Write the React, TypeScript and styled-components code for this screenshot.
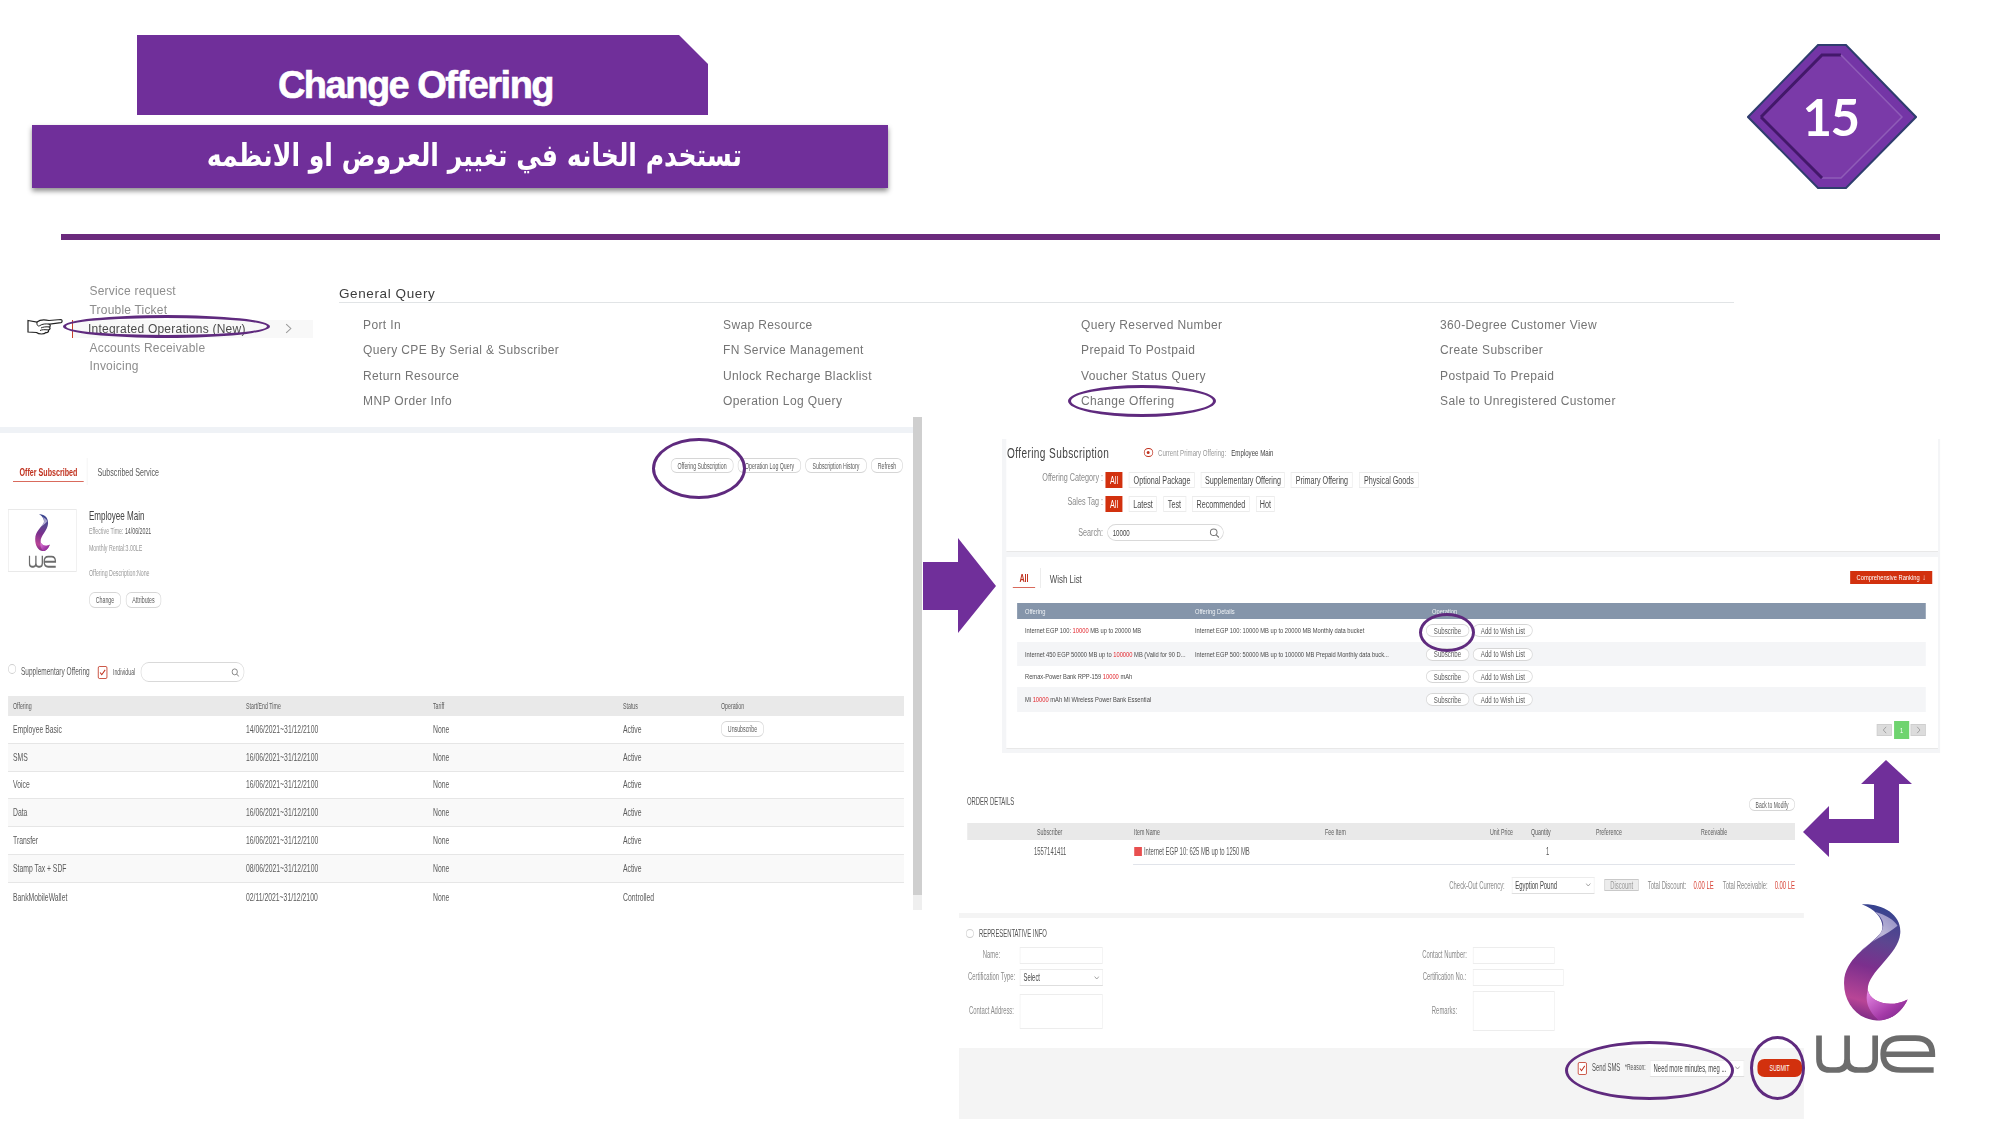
import React from "react";
import styled, { createGlobalStyle } from "styled-components";

const Global = createGlobalStyle`
  html, body { margin: 0; padding: 0; background: #fff; }
  body { font-family: "Liberation Sans", Arial, sans-serif; }
  * { box-sizing: border-box; }
`;

const PURPLE = "#702f9a";
const RED = "#d2310e";
const INK = "#5a5a5a";

/* The pasted screens on the slide are squeezed horizontally: each one lays out
   at a wider size and is scaled back. X() gives a slide-pixel length in that layout. */
const X = (n: number) => `calc(${n}px * var(--ux, 1))`;

const Slide = styled.div`
  position: relative;
  width: 2000px;
  height: 1125px;
  overflow: hidden;
  background: #fff;
`;

/* ---------- slide header ---------- */
const TitleShape = styled.div`
  position: absolute;
  left: 137px;
  top: 35px;
  width: 571px;
  height: 80px;
  background: ${PURPLE};
  clip-path: polygon(0 0, 542px 0, 571px 29px, 571px 80px, 0 80px);
  display: flex;
  align-items: center;
  justify-content: center;
  padding: 20px 14px 0 0;
`;
const TitleText = styled.h1`
  margin: 0;
  color: #fff;
  font: 700 38px/1 "Liberation Sans", Arial, sans-serif;
  letter-spacing: -1.5px;
  -webkit-text-stroke: 0.6px #fff;
`;
const SubtitleBar = styled.div`
  position: absolute;
  left: 32px;
  top: 125px;
  width: 856px;
  height: 63px;
  background: ${PURPLE};
  box-shadow: 0 3px 5px rgba(0, 0, 0, 0.45);
  display: flex;
  align-items: center;
  justify-content: center;
  padding: 0 0 2px 28px;
`;
const SubtitleText = styled.div`
  direction: rtl;
  color: #fff;
  font: 700 31px/1 "DejaVu Sans", sans-serif;
  letter-spacing: -0.6px;
  white-space: nowrap;
  transform: scaleX(0.81);
`;
const Rule = styled.div`
  position: absolute;
  left: 61px;
  top: 234px;
  width: 1879px;
  height: 6px;
  background: #6b2a7d;
`;
const Badge = styled.div`
  position: absolute;
  left: 1747px;
  top: 44px;
  width: 170px;
  height: 145px;
  display: flex;
  align-items: center;
  justify-content: center;
  color: #fff;
  font: 700 51px/1 Lato, "Open Sans", sans-serif;
  letter-spacing: -1.5px;
`;
const BadgeArt = styled.svg`
  position: absolute;
  inset: 0;
`;
const BadgeNumber = styled.span`
  position: relative;
  margin-left: -3px;
`;

/* ---------- service menu ---------- */
const MenuPanel = styled.div`
  position: absolute;
  left: 0;
  top: 282px;
  width: 1734px;
  display: flex;
  filter: blur(0.3px);
`;
const Nav = styled.nav`
  width: 339px;
  flex: none;
`;
const NavItem = styled.div<{ $active?: boolean }>`
  margin-left: 72px;
  width: 241px;
  height: 18.75px;
  display: flex;
  align-items: center;
  justify-content: space-between;
  padding: 0 21px 0 ${(p) => (p.$active ? 15 : 16.5)}px;
  font-size: 12px;
  letter-spacing: ${(p) => (p.$active ? 0.23 : 0.2)}px;
  color: ${(p) => (p.$active ? "#4a4a4a" : "#8d8d8d")};
  background: ${(p) => (p.$active ? "#f8f8f8" : "transparent")};
  border-left: 1px solid ${(p) => (p.$active ? "#c8402a" : "transparent")};
`;
const QueryPanel = styled.section`
  flex: 1;
`;
const QueryTitle = styled.div`
  height: 21px;
  border-bottom: 1px solid #e1e4e6;
  font-size: 13.5px;
  letter-spacing: 0.6px;
  line-height: 23px;
  color: #3d3d3d;
`;
const QueryGrid = styled.div`
  margin-top: 9.5px;
  padding-left: 24px;
  display: grid;
  grid-template-columns: 360px 358px 359px 1fr;
  grid-auto-rows: 25.3px;
  align-items: center;
`;
const QueryLink = styled.div`
  font-size: 12px;
  letter-spacing: 0.38px;
  color: #747474;
  white-space: nowrap;
`;

/* ---------- left screen: offer subscribed ---------- */
const LeftShot = styled.section`
  position: absolute;
  left: 0;
  top: 417px;
  width: 922px;
  height: 493px;
  display: flex;
`;
const LeftMain = styled.div`
  --ux: ${1 / 0.62};
  width: ${X(913)};
  flex: none;
  padding-top: 10px;
  transform: scaleX(0.62);
  transform-origin: 0 0;
  filter: blur(0.3px);
`;
const ScrollTrack = styled.div`
  position: absolute;
  left: 913px;
  top: 0;
  width: 9px;
  height: 100%;
  background: linear-gradient(#cfcfcf 0, #cfcfcf 97%, #efefef 97%);
`;
const Band = styled.div`
  height: 6px;
  background: #eff2f6;
`;
const TopBar = styled.div`
  height: 49px;
  margin-bottom: 27px;
  padding: 25px ${X(10)} 0 ${X(13)};
  display: flex;
  justify-content: space-between;
  align-items: flex-start;
`;
const Tabs = styled.div`
  display: flex;
  align-items: flex-start;
`;
const OfferTab = styled.div`
  width: ${X(71)};
  height: 24px;
  padding-top: 8px;
  text-align: center;
  font-size: 11.5px;
  font-weight: 700;
  color: #c0311e;
  border-bottom: 1px solid #d96a5c;
  white-space: nowrap;
`;
const PlainTab = styled.div`
  margin-left: ${X(3)};
  height: 27px;
  padding: 8px 0 0 ${X(10)};
  border-left: 1px solid #eee;
  font-size: 11.5px;
  color: ${INK};
  white-space: nowrap;
`;
const Toolbar = styled.div`
  display: flex;
  gap: ${X(4.5)};
`;
const GhostButton = styled.div<{ $w: number; $h?: number }>`
  width: ${(p) => X(p.$w)};
  height: ${(p) => p.$h ?? 15}px;
  display: flex;
  align-items: center;
  justify-content: center;
  border: 1px solid #d6d6d6;
  border-radius: 9px / 6px;
  font-size: 8.5px;
  color: ${INK};
  white-space: nowrap;
  background: #fff;
`;
const OfferBlock = styled.div`
  margin-left: ${X(8)};
  display: flex;
  gap: ${X(12)};
`;
const LogoBox = styled.div`
  width: ${X(69)};
  height: 63px;
  border: 1px solid #e9e9e9;
  display: flex;
  align-items: center;
  justify-content: center;
`;
const SmallLogo = styled.div`
  width: ${X(28)};
  height: 55px;
`;
const OfferInfo = styled.div`
  display: flex;
  flex-direction: column;
  align-items: flex-start;
`;
const OfferName = styled.div`
  font-size: 13px;
  line-height: 14px;
  color: #444;
`;
const OfferMeta = styled.div<{ $gap: number }>`
  margin-top: ${(p) => p.$gap}px;
  font-size: 8.5px;
  line-height: 10px;
  color: #9a9a9a;
  white-space: nowrap;
`;
const MetaValue = styled.span`
  color: #555;
`;
const OfferActions = styled.div`
  margin-top: 14px;
  display: flex;
  gap: ${X(5)};
`;
const FilterRow = styled.div`
  margin-top: 54px;
  height: 20px;
  padding-left: ${X(8)};
  display: flex;
  align-items: center;
`;
const SmallCircle = styled.span`
  width: ${X(8)};
  height: 10px;
  margin-top: -6px;
  border: 1px solid #cfcfcf;
  border-radius: 50%;
  flex: none;
`;
const FilterLabel = styled.span`
  margin: -2px 0 0 ${X(5)};
  width: ${X(72)};
  font-size: 10.5px;
  color: ${INK};
  white-space: nowrap;
`;
const CheckMark = styled.span`
  width: ${X(9)};
  height: 13px;
  margin-left: ${X(5)};
  border: 1px solid #c0311e;
  border-radius: 2px;
  display: flex;
  align-items: center;
  justify-content: center;
  flex: none;
  background: #fff;
`;
const IndividualLabel = styled.span`
  margin-left: ${X(6)};
  width: ${X(28)};
  font-size: 8.5px;
  color: ${INK};
`;
const SearchBox = styled.div<{ $w: number; $h: number }>`
  width: ${(p) => X(p.$w)};
  height: ${(p) => p.$h}px;
  padding: 0 ${X(4)} 0 ${X(5)};
  display: flex;
  align-items: center;
  justify-content: space-between;
  border: 1px solid #d9d9d9;
  border-radius: 13px / 9px;
  font-size: 8.5px;
  color: #444;
`;
const SubTable = styled.div`
  margin: 14px ${X(9)} 0 ${X(8)};
`;
const subCols = `${X(233)} ${X(187)} ${X(190)} ${X(98)} 1fr`;
const SubHead = styled.div`
  height: 20px;
  padding-left: ${X(5)};
  display: grid;
  grid-template-columns: ${subCols};
  align-items: center;
  background: #e9e9e9;
  font-size: 8.5px;
  color: #5c5c5c;
`;
const SubRow = styled.div<{ $h: number; $alt?: boolean }>`
  height: ${(p) => p.$h}px;
  padding: 0 0 2px ${X(5)};
  display: grid;
  grid-template-columns: ${subCols};
  align-items: center;
  background: ${(p) => (p.$alt ? "#f9f9f9" : "#fff")};
  border-bottom: 1px solid #e6e6e6;
  font-size: 11px;
  color: ${INK};
  white-space: nowrap;
  &:last-child {
    border-bottom: none;
  }
`;

/* ---------- right screen: offering subscription ---------- */
const OfferingShot = styled.section`
  --ux: ${1 / 0.72};
  position: absolute;
  left: 1002px;
  top: 439px;
  width: ${X(938)};
  height: 314px;
  padding: 0 ${X(2)} 0 ${X(4)};
  background: #f4f5f7;
  transform: scaleX(0.72);
  transform-origin: 0 0;
  filter: blur(0.3px);
`;
const Card = styled.div<{ $h: number }>`
  height: ${(p) => p.$h}px;
  margin-bottom: 5px;
  background: #fff;
  border-bottom: 1px solid #e8e8e8;
`;
const CardHead = styled.div`
  height: 33px;
  padding: 0 0 6px ${X(1)};
  display: flex;
  align-items: center;
`;
const CardTitle = styled.div`
  width: ${X(137)};
  font-size: 14px;
  letter-spacing: 0.55px;
  color: #444;
`;
const Radio = styled.span`
  width: ${X(9)};
  height: 9px;
  margin-right: ${X(5)};
  border: 1px solid #c0311e;
  border-radius: 50%;
  display: flex;
  align-items: center;
  justify-content: center;
  &::after {
    content: "";
    width: 4px;
    height: 3px;
    border-radius: 50%;
    background: #c0311e;
  }
`;
const CurrentNote = styled.div`
  font-size: 8.5px;
  color: #999;
  white-space: nowrap;
`;
const CurrentValue = styled.span`
  margin-left: ${X(5)};
  color: #444;
`;
const ChipRow = styled.div<{ $top: number }>`
  margin-top: ${(p) => p.$top}px;
  display: flex;
  align-items: center;
  gap: ${X(6)};
`;
const ChipLabel = styled.div`
  width: ${X(97)};
  margin-right: ${X(-3)};
  margin-top: -6px;
  text-align: right;
  font-size: 10px;
  color: #8b8b8b;
`;
const Chip = styled.div<{ $w: number; $on?: boolean }>`
  width: ${(p) => X(p.$w)};
  height: 16px;
  margin-right: ${(p) => (p.$on ? X(1) : "0")};
  display: flex;
  align-items: center;
  justify-content: center;
  border: 1px solid ${(p) => (p.$on ? RED : "#ececec")};
  background: ${(p) => (p.$on ? RED : "#fff")};
  color: ${(p) => (p.$on ? "#fff" : "#4a4a4a")};
  font-size: 10px;
  white-space: nowrap;
`;
const SearchRow = styled.div`
  margin-top: 12px;
  display: flex;
  align-items: center;
  gap: ${X(4)};
`;
const SearchLabel = styled.div`
  width: ${X(97)};
  text-align: right;
  font-size: 10px;
  color: #8b8b8b;
`;
const ListTop = styled.div`
  height: 46px;
  padding: 11px ${X(6)} 0 ${X(7)};
  display: flex;
  justify-content: space-between;
  align-items: flex-start;
`;
const ListTabs = styled.div`
  display: flex;
`;
const AllTab = styled.div`
  width: ${X(22)};
  height: 20px;
  padding-top: 5px;
  text-align: center;
  font-size: 10px;
  font-weight: 700;
  color: #c0311e;
  border-bottom: 1px solid #d96a5c;
`;
const WishTab = styled.div`
  margin-left: ${X(5)};
  height: 20px;
  padding: 5px 0 0 ${X(9)};
  border-left: 1px solid #e6e6e6;
  font-size: 11px;
  color: #4a4a4a;
  white-space: nowrap;
`;
const RankButton = styled.div`
  margin-top: 3px;
  width: ${X(82)};
  height: 13px;
  display: flex;
  align-items: center;
  justify-content: center;
  gap: ${X(3)};
  background: ${RED};
  color: #fff;
  font-size: 8px;
  white-space: nowrap;
`;
const Offers = styled.div`
  margin-left: ${X(11)};
  width: ${X(909)};
`;
const OffersHead = styled.div`
  height: 16px;
  padding-left: ${X(8)};
  display: grid;
  grid-template-columns: ${X(170)} ${X(237)} 1fr;
  align-items: center;
  background: #8595aa;
  color: #eef1f4;
  font-size: 8px;
`;
const OfferRow = styled.div<{ $h: number; $alt?: boolean }>`
  height: ${(p) => p.$h}px;
  padding-left: ${X(8)};
  display: grid;
  grid-template-columns: ${X(170)} ${X(231)} 1fr;
  align-items: center;
  background: ${(p) => (p.$alt ? "#f4f5f7" : "#fff")};
  font-size: 8px;
  color: #4a4a4a;
  white-space: nowrap;
`;
const Hit = styled.span`
  color: #e3242b;
`;
const OfferCell = styled.div`
  overflow: hidden;
`;
const OfferOps = styled.div`
  display: flex;
  gap: ${X(4)};
`;
const Pager = styled.div`
  margin-top: 9px;
  display: flex;
  justify-content: flex-end;
  align-items: center;
  gap: ${X(2)};
`;
const PageArrow = styled.div`
  width: ${X(15)};
  height: 12px;
  display: flex;
  align-items: center;
  justify-content: center;
  background: #dcdcdc;
  border: 1px solid #cfcfcf;
`;
const PageCurrent = styled.div`
  width: ${X(15)};
  height: 18px;
  display: flex;
  align-items: center;
  justify-content: center;
  background: #6fd46f;
  color: #fff;
  font-size: 8px;
`;

/* ---------- right screen: order details ---------- */
const OrderShot = styled.section`
  --ux: ${1 / 0.59};
  position: absolute;
  left: 959px;
  top: 790px;
  width: ${X(845)};
  height: 328px;
  padding-top: 8px;
  transform: scaleX(0.59);
  transform-origin: 0 0;
  filter: blur(0.3px);
`;
const OrderHead = styled.div`
  height: 25px;
  padding: 0 ${X(9)} 0 ${X(8)};
  display: flex;
  justify-content: space-between;
  align-items: flex-start;
`;
const OrderTitle = styled.div`
  margin-top: -2px;
  font-size: 10px;
  color: #555;
`;
const orderCols = `${X(70)} ${X(97)} ${X(191)} ${X(165)} ${X(41)} ${X(65)} ${X(105)} 1fr`;
const OrderColumns = styled.div`
  margin: 0 ${X(9)} 0 ${X(8)};
  height: 17px;
  display: grid;
  grid-template-columns: ${orderCols};
  align-items: center;
  background: #e9e9e9;
  font-size: 9px;
  color: #5c5c5c;
  white-space: nowrap;
`;
const OrderRow = styled.div`
  margin: 0 ${X(9)} 0 ${X(8)};
  height: 24px;
  padding-bottom: 1px;
  display: grid;
  grid-template-columns: ${orderCols};
  align-items: center;
  font-size: 10px;
  color: ${INK};
  white-space: nowrap;
`;
const OrderId = styled.span`
  margin-left: ${X(-3)};
`;
const OrderItem = styled.span`
  display: flex;
  align-items: center;
  gap: ${X(2)};
`;
const ItemMark = styled.span`
  width: ${X(8)};
  height: 9px;
  background: #e84f4f;
  flex: none;
`;
const OrderQty = styled.span`
  padding-left: ${X(15)};
`;
const OrderLine = styled.div`
  margin: 0 ${X(9)} 0 ${X(174)};
  height: 1px;
  background: #e1e4ea;
`;
const CheckoutRow = styled.div`
  margin: 11px ${X(9)} 0 0;
  height: 18px;
  display: flex;
  justify-content: flex-end;
  align-items: center;
  gap: ${X(7)};
  font-size: 10px;
  color: #8a8a8a;
  white-space: nowrap;
`;
const SelectBox = styled.div<{ $w: number; $h: number }>`
  width: ${(p) => X(p.$w)};
  height: ${(p) => p.$h}px;
  padding: 0 ${X(3)};
  display: flex;
  align-items: center;
  justify-content: space-between;
  background: #fff;
  border: 1px solid #ececec;
  border-bottom-color: #dedede;
  font-size: 10px;
  color: #444;
  white-space: nowrap;
`;
const DiscountButton = styled.div`
  margin: 0 ${X(2)} 0 ${X(3)};
  width: ${X(34)};
  height: 12px;
  display: flex;
  align-items: center;
  justify-content: center;
  background: #ececec;
  border: 1px solid #c9c9c9;
  color: #9a9a9a;
`;
const Money = styled.span`
  margin-right: ${X(2)};
  color: #d9463a;
  &:last-child {
    margin-right: 0;
  }
`;
const GreyBand = styled.div`
  margin-top: 19px;
  height: 5px;
  background: #f4f4f4;
`;
const RepHead = styled.div`
  margin-top: 9px;
  height: 12px;
  padding-left: ${X(7)};
  display: flex;
  align-items: center;
  gap: ${X(5)};
  font-size: 10px;
  color: #555;
`;
const RepCircle = styled.span`
  width: ${X(8)};
  height: 9px;
  border: 1px solid #cfcfcf;
  border-radius: 50%;
`;
const RepForm = styled.div`
  margin-top: 8px;
  padding-left: ${X(9)};
  display: grid;
  grid-template-columns: ${X(52)} ${X(83)} ${X(318)} ${X(52)} 1fr;
  grid-template-rows: 17px 17px 40px;
  row-gap: 5px;
  align-items: center;
`;
const RepLabel = styled.div`
  padding: 0 ${X(5)} 2px 0;
  text-align: center;
  font-size: 10px;
  color: #8a8a8a;
  white-space: nowrap;
`;
const RepGap = styled.div``;
const RepField = styled.div<{ $w: number; $h: number }>`
  width: ${(p) => X(p.$w)};
  height: ${(p) => p.$h}px;
  border: 1px solid #ededed;
`;
const SubmitBand = styled.div`
  margin-top: 17px;
  height: 71px;
  padding: 11px ${X(2)} 0 0;
  background: #f4f4f4;
  display: flex;
  justify-content: flex-end;
  align-items: flex-start;
`;
const SubmitRow = styled.div`
  display: flex;
  align-items: center;
  height: 18px;
  font-size: 10px;
  color: #555;
  white-space: nowrap;
`;
const SmsText = styled.span`
  margin-left: ${X(5)};
  width: ${X(33)};
  margin-top: -2px;
`;
const ReasonText = styled.span`
  width: ${X(25)};
  font-size: 8.5px;
  margin-top: -2px;
`;
const SubmitButton = styled.div`
  margin-left: ${X(13)};
  width: ${X(45)};
  height: 18px;
  display: flex;
  align-items: center;
  justify-content: center;
  background: ${RED};
  border-radius: 12px / 7px;
  color: #fff;
  font-size: 9px;
`;

/* ---------- annotations over the slide ---------- */
const Ring = styled.div<{ $x: number; $y: number; $w: number; $h: number }>`
  position: absolute;
  left: ${(p) => p.$x}px;
  top: ${(p) => p.$y}px;
  width: ${(p) => p.$w}px;
  height: ${(p) => p.$h}px;
  border: 3px solid #5f2a7e;
  border-radius: 50%;
  pointer-events: none;
`;
const Overlay = styled.svg<{ $x: number; $y: number }>`
  position: absolute;
  left: ${(p) => p.$x}px;
  top: ${(p) => p.$y}px;
`;
const BigLogo = styled.div`
  position: absolute;
  left: 1815px;
  top: 900px;
  width: 122px;
  height: 174px;
`;

const Chevron = ({ w = 6, h = 10, color = "#999" }: { w?: number; h?: number; color?: string }) => (
  <svg width={w} height={h} viewBox="0 0 6 10" preserveAspectRatio="none">
    <path d="M1 1l4 4-4 4" fill="none" stroke={color} strokeWidth="0.9" />
  </svg>
);
const ChevronLeft = () => (
  <svg width="6" height="8" viewBox="0 0 6 10" preserveAspectRatio="none">
    <path d="M5 1L1 5l4 4" fill="none" stroke="#888" strokeWidth="0.9" />
  </svg>
);
const ChevronDown = () => (
  <svg width="9" height="4" viewBox="0 0 6 4" preserveAspectRatio="none">
    <path d="M0.5 0.5L3 3l2.5-2.5" fill="none" stroke="#888" strokeWidth="0.8" />
  </svg>
);
const Magnifier = ({ w, h }: { w: number; h: number }) => (
  <svg width={w} height={h} viewBox="0 0 10 10" preserveAspectRatio="none">
    <circle cx="4.3" cy="4.3" r="3.3" fill="none" stroke="#777" strokeWidth="1" />
    <path d="M6.8 6.8L9.5 9.5" stroke="#777" strokeWidth="1.1" />
  </svg>
);
const Tick = () => (
  <svg width="11" height="7" viewBox="0 0 8 8" preserveAspectRatio="none">
    <path d="M1 4l2 2.5L7 1" fill="none" stroke="#c0311e" strokeWidth="1.2" />
  </svg>
);

const WeLogo = ({ id }: { id: string }) => (
  <svg width="100%" height="100%" viewBox="25 15 365 520" preserveAspectRatio="none">
    <defs>
      <linearGradient id={`${id}a`} x1="0.55" y1="0" x2="0.4" y2="1">
        <stop offset="0" stopColor="#34438f" />
        <stop offset="0.3" stopColor="#5c4690" />
        <stop offset="0.55" stopColor="#7c2f8d" />
        <stop offset="0.85" stopColor="#b84596" />
        <stop offset="1" stopColor="#7d2a86" />
      </linearGradient>
      <linearGradient id={`${id}b`} x1="0" y1="1" x2="1" y2="0">
        <stop offset="0" stopColor="#7a5aa8" />
        <stop offset="0.55" stopColor="#bdb8d8" />
        <stop offset="1" stopColor="#8a86c0" />
      </linearGradient>
      <linearGradient id={`${id}c`} x1="0" y1="0" x2="1" y2="1">
        <stop offset="0" stopColor="#e88ae6" />
        <stop offset="0.6" stopColor="#a53aa8" />
        <stop offset="1" stopColor="#6d2483" />
      </linearGradient>
    </defs>
    <path
      d="M165 28C230 25 285 60 280 115C275 180 180 230 183 285C190 320 250 340 302 312C285 350 250 376 210 375C150 372 110 320 112 260C115 190 180 160 220 115C240 90 215 45 165 28Z"
      fill={`url(#${id}a)`}
    />
    <path
      d="M152 178C175 155 200 140 220 115C240 90 225 65 203 50C240 60 262 75 272 92C240 120 190 135 152 178Z"
      fill={`url(#${id}b)`}
    />
    <path
      d="M183 285C190 320 250 340 302 312C285 350 250 376 215 374C188 350 172 320 183 285Z"
      fill={`url(#${id}c)`}
    />
    <path
      d="M37 420V490Q37 523 70 523H88Q121 523 121 490V420M121 490Q121 523 154 523H172Q205 523 205 490V420"
      fill="none"
      stroke="#6c6c6c"
      strokeWidth="17"
    />
    <path
      d="M229 476H376Q376 428 325 428H282Q229 428 229 476Q229 523 282 523H380"
      fill="none"
      stroke="#6c6c6c"
      strokeWidth="17"
    />
  </svg>
);

const navItems = ["Service request", "Trouble Ticket"];
const navItemsEnd = ["Accounts Receivable", "Invoicing"];
const queryLinks = [
  "Port In", "Swap Resource", "Query Reserved Number", "360-Degree Customer View",
  "Query CPE By Serial & Subscriber", "FN Service Management", "Prepaid To Postpaid", "Create Subscriber",
  "Return Resource", "Unlock Recharge Blacklist", "Voucher Status Query", "Postpaid To Prepaid",
  "MNP Order Info", "Operation Log Query", "Change Offering", "Sale to Unregistered Customer",
];
const subRows = [
  { name: "Employee Basic", time: "14/06/2021~31/12/2100", status: "Active", h: 28, op: true },
  { name: "SMS", time: "16/06/2021~31/12/2100", status: "Active", h: 28 },
  { name: "Voice", time: "16/06/2021~31/12/2100", status: "Active", h: 27 },
  { name: "Data", time: "16/06/2021~31/12/2100", status: "Active", h: 28 },
  { name: "Transfer", time: "16/06/2021~31/12/2100", status: "Active", h: 28 },
  { name: "Stamp Tax + SDF", time: "08/06/2021~31/12/2100", status: "Active", h: 28 },
  { name: "BankMobileWallet", time: "02/11/2021~31/12/2100", status: "Controlled", h: 29 },
];

const offerRows = [
  {
    h: 23,
    name: <>Internet EGP 100: <Hit>10000</Hit> MB up to 20000 MB</>,
    detail: "Internet EGP 100: 10000 MB up to 20000 MB Monthly data bucket",
  },
  {
    h: 24,
    name: <>Internet 450 EGP 50000 MB up to <Hit>100000</Hit> MB (Valid for 90 D...</>,
    detail: "Internet EGP 500: 50000 MB up to 100000 MB Prepaid Monthly data buck...",
  },
  { h: 21, name: <>Remax-Power Bank RPP-159 <Hit>10000</Hit> mAh</>, detail: "" },
  { h: 25, name: <>Mi <Hit>10000</Hit> mAh Mi Wireless Power Bank Essential</>, detail: "" },
];

export default function App() {
  return (
    <Slide>
      <Global />

      <TitleShape>
        <TitleText>Change Offering</TitleText>
      </TitleShape>
      <SubtitleBar>
        <SubtitleText>تستخدم الخانه في تغيير العروض او الانظمه</SubtitleText>
      </SubtitleBar>
      <Rule />
      <Badge>
        <BadgeArt width="170" height="145" viewBox="0 0 170 145">
          <polygon points="71,1 99,1 169,73 99,144 71,144 1,73" fill="#7435a6" stroke="#2f3d6e" strokeWidth="2" />
          <polygon points="75,11 94,11 155,73 94,134 75,134 14,73" fill="#7a3aa8" />
          <polyline points="14,73 75,11 94,11" fill="none" stroke="#43186a" strokeWidth="3" />
          <polyline points="94,11 155,73 94,134 75,134" fill="none" stroke="#8f5cb8" strokeWidth="1.5" />
          <polyline points="75,134 14,73" fill="none" stroke="#43186a" strokeWidth="3" />
        </BadgeArt>
        <BadgeNumber>15</BadgeNumber>
      </Badge>

      <MenuPanel>
        <Nav>
          {navItems.map((n) => (
            <NavItem key={n}>{n}</NavItem>
          ))}
          <NavItem $active>
            Integrated Operations (New)
            <Chevron w={7} h={11} />
          </NavItem>
          {navItemsEnd.map((n) => (
            <NavItem key={n}>{n}</NavItem>
          ))}
        </Nav>
        <QueryPanel>
          <QueryTitle>General Query</QueryTitle>
          <QueryGrid>
            {queryLinks.map((q) => (
              <QueryLink key={q}>{q}</QueryLink>
            ))}
          </QueryGrid>
        </QueryPanel>
      </MenuPanel>

      <LeftShot>
        <LeftMain>
          <Band />
          <TopBar>
            <Tabs>
              <OfferTab>Offer Subscribed</OfferTab>
              <PlainTab>Subscribed Service</PlainTab>
            </Tabs>
            <Toolbar>
              <GhostButton $w={63}>Offering Subscription</GhostButton>
              <GhostButton $w={63}>Operation Log Query</GhostButton>
              <GhostButton $w={61}>Subscription History</GhostButton>
              <GhostButton $w={32}>Refresh</GhostButton>
            </Toolbar>
          </TopBar>
          <OfferBlock>
            <LogoBox>
              <SmallLogo>
                <WeLogo id="small" />
              </SmallLogo>
            </LogoBox>
            <OfferInfo>
              <OfferName>Employee Main</OfferName>
              <OfferMeta $gap={3}>
                Effective Time: <MetaValue>14/06/2021</MetaValue>
              </OfferMeta>
              <OfferMeta $gap={7}>Monthly Rental:3.00LE</OfferMeta>
              <OfferMeta $gap={15}>Offering Description:None</OfferMeta>
              <OfferActions>
                <GhostButton $w={32} $h={16}>Change</GhostButton>
                <GhostButton $w={35} $h={16}>Attributes</GhostButton>
              </OfferActions>
            </OfferInfo>
          </OfferBlock>
          <FilterRow>
            <SmallCircle />
            <FilterLabel>Supplementary Offering</FilterLabel>
            <CheckMark>
              <Tick />
            </CheckMark>
            <IndividualLabel>Individual</IndividualLabel>
            <SearchBox $w={103} $h={20}>
              <span />
              <Magnifier w={13} h={9} />
            </SearchBox>
          </FilterRow>
          <SubTable>
            <SubHead>
              <span>Offering</span>
              <span>Start/End Time</span>
              <span>Tariff</span>
              <span>Status</span>
              <span>Operation</span>
            </SubHead>
            {subRows.map((r, i) => (
              <SubRow key={r.name} $h={r.h} $alt={i % 2 === 1}>
                <span>{r.name}</span>
                <span>{r.time}</span>
                <span>None</span>
                <span>{r.status}</span>
                {r.op ? (
                  <GhostButton $w={43} $h={16}>Unsubscribe</GhostButton>
                ) : (
                  <span />
                )}
              </SubRow>
            ))}
          </SubTable>
        </LeftMain>
        <ScrollTrack />
      </LeftShot>

      <OfferingShot>
        <Card $h={113}>
          <CardHead>
            <CardTitle>Offering Subscription</CardTitle>
            <Radio />
            <CurrentNote>
              Current Primary Offering:
              <CurrentValue>Employee Main</CurrentValue>
            </CurrentNote>
          </CardHead>
          <ChipRow $top={0}>
            <ChipLabel>Offering Category :</ChipLabel>
            <Chip $w={16} $on>All</Chip>
            <Chip $w={66}>Optional Package</Chip>
            <Chip $w={84}>Supplementary Offering</Chip>
            <Chip $w={62}>Primary Offering</Chip>
            <Chip $w={60}>Physical Goods</Chip>
          </ChipRow>
          <ChipRow $top={8}>
            <ChipLabel>Sales Tag :</ChipLabel>
            <Chip $w={16} $on>All</Chip>
            <Chip $w={28}>Latest</Chip>
            <Chip $w={23}>Test</Chip>
            <Chip $w={58}>Recommended</Chip>
            <Chip $w={19}>Hot</Chip>
          </ChipRow>
          <SearchRow>
            <SearchLabel>Search:</SearchLabel>
            <SearchBox $w={117} $h={17}>
              10000
              <Magnifier w={14} h={10} />
            </SearchBox>
          </SearchRow>
        </Card>
        <Card $h={192}>
          <ListTop>
            <ListTabs>
              <AllTab>All</AllTab>
              <WishTab>Wish List</WishTab>
            </ListTabs>
            <RankButton>
              Comprehensive Ranking
              <span>↓</span>
            </RankButton>
          </ListTop>
          <Offers>
            <OffersHead>
              <span>Offering</span>
              <span>Offering Details</span>
              <span>Operation</span>
            </OffersHead>
            {offerRows.map((r, i) => (
              <OfferRow key={i} $h={r.h} $alt={i % 2 === 1}>
                <OfferCell>{r.name}</OfferCell>
                <OfferCell>{r.detail}</OfferCell>
                <OfferOps>
                  <GhostButton $w={43} $h={13}>Subscribe</GhostButton>
                  <GhostButton $w={60} $h={13}>Add to Wish List</GhostButton>
                </OfferOps>
              </OfferRow>
            ))}
            <Pager>
              <PageArrow><ChevronLeft /></PageArrow>
              <PageCurrent>1</PageCurrent>
              <PageArrow><Chevron w={6} h={8} color="#888" /></PageArrow>
            </Pager>
          </Offers>
        </Card>
      </OfferingShot>

      <OrderShot>
        <OrderHead>
          <OrderTitle>ORDER DETAILS</OrderTitle>
          <GhostButton $w={46} $h={13}>Back to Modify</GhostButton>
        </OrderHead>
        <OrderColumns>
          <span />
          <span>Subscriber</span>
          <span>Item Name</span>
          <span>Fee Item</span>
          <span>Unit Price</span>
          <span>Quantity</span>
          <span>Preference</span>
          <span>Receivable</span>
        </OrderColumns>
        <OrderRow>
          <span />
          <OrderId>1557141411</OrderId>
          <OrderItem>
            <ItemMark />
            Internet EGP 10: 625 MB up to 1250 MB
          </OrderItem>
          <span />
          <span />
          <OrderQty>1</OrderQty>
        </OrderRow>
        <OrderLine />
        <CheckoutRow>
          Check-Out Currency:
          <SelectBox $w={83} $h={17}>
            Egyption Pound
            <ChevronDown />
          </SelectBox>
          <DiscountButton>Discount</DiscountButton>
          Total Discount:
          <Money>0.00 LE</Money>
          Total Receivable:
          <Money>0.00 LE</Money>
        </CheckoutRow>
        <GreyBand />
        <RepHead>
          <RepCircle />
          REPRESENTATIVE INFO
        </RepHead>
        <RepForm>
          <RepLabel>Name:</RepLabel>
          <RepField $w={83} $h={17} />
          <RepGap />
          <RepLabel>Contact Number:</RepLabel>
          <RepField $w={82} $h={17} />
          <RepLabel>Certification Type:</RepLabel>
          <SelectBox $w={83} $h={17}>
            Select
            <ChevronDown />
          </SelectBox>
          <RepGap />
          <RepLabel>Certification No.:</RepLabel>
          <RepField $w={91} $h={17} />
          <RepLabel>Contact Address:</RepLabel>
          <RepField $w={83} $h={35} />
          <RepGap />
          <RepLabel>Remarks:</RepLabel>
          <RepField $w={82} $h={40} />
        </RepForm>
        <SubmitBand>
          <SubmitRow>
            <CheckMark>
              <Tick />
            </CheckMark>
            <SmsText>Send SMS</SmsText>
            <ReasonText>*Reason:</ReasonText>
            <SelectBox $w={94} $h={17}>
              Need more minutes, meg ...
              <ChevronDown />
            </SelectBox>
            <SubmitButton>SUBMIT</SubmitButton>
          </SubmitRow>
        </SubmitBand>
      </OrderShot>

      {/* slide arrows */}
      <Overlay $x={923} $y={538} width="74" height="96" viewBox="0 0 74 96">
        <polygon points="0,24 35,24 35,0 73,48 35,95 35,72 0,72" fill={PURPLE} />
      </Overlay>
      <Overlay $x={1803} $y={760} width="110" height="98" viewBox="0 0 110 98">
        <polygon
          points="83,0 109,24 96,24 96,83 26,83 26,97 0,72 26,46 26,59 71,59 71,24 58,24"
          fill={PURPLE}
        />
      </Overlay>

      {/* pointing hand */}
      <Overlay $x={27} $y={318} width="36" height="18" viewBox="0 0 36 18">
        <path
          d="M1 2.5L10 4C13 1.5 18 1.5 22 2.5L34 1.5C35.5 1.8 35.5 4.2 34 4.6L22.5 6.2C23.5 7 23.5 8.5 22.5 9C23.5 10 23 11.6 21.5 12C22 13.5 20.5 15 19 14.5C17 16.5 12 16.5 9.5 14.5L1 14Z"
          fill="#fff"
          stroke="#222"
          strokeWidth="1.2"
        />
        <path d="M13 7.5C15 6 19 5.5 22.5 6.2M14 10C16 9 19 8.5 22.5 9M13 12.5C15 11.5 18 11.5 21.5 12M10 4C9.5 7 11 9 13 7.5" fill="none" stroke="#222" strokeWidth="1" />
      </Overlay>

      <Ring $x={63} $y={315} $w={207} $h={23} />
      <Ring $x={1068} $y={385} $w={148} $h={32} />
      <Ring $x={652} $y={438} $w={94} $h={61} />
      <Ring $x={1419} $y={613} $w={56} $h={39} />
      <Ring $x={1565} $y={1041} $w={169} $h={59} />
      <Ring $x={1750} $y={1036} $w={55} $h={64} />

      <BigLogo>
        <WeLogo id="big" />
      </BigLogo>
    </Slide>
  );
}
